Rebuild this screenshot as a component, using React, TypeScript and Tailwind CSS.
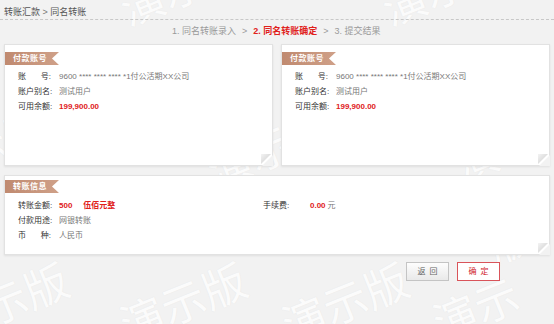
import React from "react";

const marks = [
  { x: 118, y: -34 },
  { x: 380, y: -34 },
  { x: -80, y: 128 },
  { x: 205, y: 128 },
  { x: 470, y: 128 },
  { x: -60, y: 282 },
  { x: 118, y: 282 },
  { x: 280, y: 282 },
  { x: 440, y: 282 },
];

function Ribbon({ text, top }: { text: string; top: string }) {
  return (
    <div
      className={`${top} h-[13px] w-[54px] bg-[linear-gradient(90deg,#c08a70,#cfa088)] [clip-path:polygon(0_0,100%_0,87%_50%,100%_100%,0_100%)] pl-[8px] text-[8px] font-bold leading-[13px] tracking-[0.5px] text-white`}
    >
      {text}
    </div>
  );
}

function Fold() {
  return (
    <>
      <span className="absolute -right-px -bottom-px h-[11px] w-[11px] bg-[#f2f2f2] [clip-path:polygon(100%_0,100%_100%,0_100%)]" />
      <span className="absolute right-0 bottom-0 h-[10px] w-[10px] bg-[linear-gradient(135deg,#f4f4f4,#c9c9c9)] [clip-path:polygon(0_100%,100%_0,0_0)] translate-x-[-1px] translate-y-[-1px]" />
    </>
  );
}

function Row({ label, children }: { label: React.ReactNode; children: React.ReactNode }) {
  return (
    <div className="flex items-center leading-[15px]">
      <div className="w-[54px] shrink-0 pl-[13px] text-[#333]">{label}</div>
      <div className="text-[#777]">{children}</div>
    </div>
  );
}

function Spread({ a, b }: { a: string; b: string }) {
  return (
    <span className="flex w-[33px] justify-between">
      <span>{a}</span>
      <span>{b}</span>
    </span>
  );
}

function AccountCard() {
  return (
    <div className="relative h-[122px] w-[269px] border border-[#e2e2e2] bg-white shadow-[0_1px_2px_rgba(0,0,0,0.08)]">
      <Ribbon text="付款账号" top="mt-[7px]" />
      <div className="mt-[4px]">
        <Row label={<Spread a="账" b="号:" />}>9600 **** **** **** *1付公活期XX公司</Row>
        <Row label="账户别名:">测试用户</Row>
        <Row label="可用余额:">
          <span className="font-bold text-[#e0211b]">199,900.00</span>
        </Row>
      </div>
      <Fold />
    </div>
  );
}

export default function App() {
  return (
    <div className="relative h-[324px] w-[554px] overflow-hidden bg-[#f2f2f2] font-['Liberation_Sans','Noto_Sans_CJK_SC',sans-serif] text-[8px]">
      {marks.map((m, i) => (
        <div
          key={i}
          className="pointer-events-none absolute rotate-[-22deg] text-[44px] leading-none text-[#fbfbfb] [text-shadow:0_0_1px_#e2e2e2]"
          style={{ left: m.x, top: m.y }}
        >
          演示版
        </div>
      ))}

      <div className="relative">
        <div className="h-[20px] border-b border-dashed border-[#c8c8c8] px-[4px] pt-[7px] text-[9px] leading-[11px] text-[#555]">
          转账汇款 <span className="text-[#777]">&gt;</span> 同名转账
        </div>

        <div className="flex h-[24px] items-center pl-[172px] text-[9px] text-[#9a9a9a]">
          <span>1. 同名转账录入</span>
          <span className="mx-[6px]">&gt;</span>
          <span className="font-bold text-[#e0211b]">2. 同名转账确定</span>
          <span className="mx-[6px]">&gt;</span>
          <span>3. 提交结果</span>
        </div>

        <div className="flex gap-[8px] px-[4px]">
          <AccountCard />
          <AccountCard />
        </div>

        <div className="mx-[4px] mt-[9px]">
          <div className="relative h-[80px] border border-[#e2e2e2] bg-white shadow-[0_1px_2px_rgba(0,0,0,0.08)]">
            <Ribbon text="转账信息" top="mt-[4px]" />
            <div className="mt-[5px] flex items-start">
              <div className="w-[258px]">
                <Row label="转账金额:">
                  <span className="font-bold text-[#e0211b]">500</span>
                  <span className="ml-[11px] font-bold text-[#e0211b]">伍佰元整</span>
                </Row>
                <Row label="付款用途:">网银转账</Row>
                <Row label={<Spread a="币" b="种:" />}>人民币</Row>
              </div>
              <div className="flex items-center leading-[15px]">
                <div className="w-[47px] text-[#333]">手续费:</div>
                <span className="font-bold text-[#e0211b]">0.00</span>
                <span className="ml-[2px] text-[#777]">元</span>
              </div>
            </div>
            <Fold />
          </div>
        </div>

        <div className="mt-[7px] flex justify-end gap-[8px] pr-[54px]">
          <button className="h-[19px] w-[43px] border border-[#c4c4c4] bg-[linear-gradient(#fdfdfd,#e9e9e9)] pl-[4px] text-[8px] tracking-[4px] text-[#666]">
            返回
          </button>
          <button className="h-[19px] w-[43px] border border-[#d9545a] bg-white pl-[4px] text-[8px] tracking-[4px] text-[#d0232b]">
            确定
          </button>
        </div>
      </div>
    </div>
  );
}
